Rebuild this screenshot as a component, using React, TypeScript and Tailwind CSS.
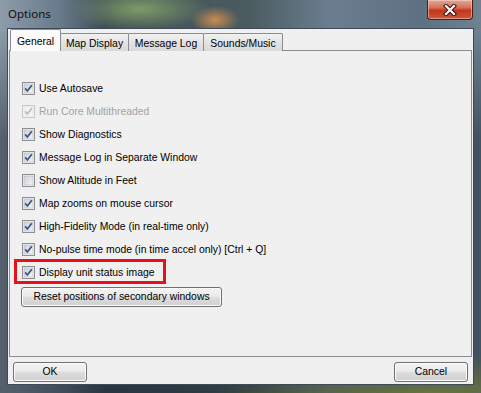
const rows = [
  { label: "Use Autosave", checked: true },
  { label: "Run Core Multithreaded", checked: true, disabled: true },
  { label: "Show Diagnostics", checked: true },
  { label: "Message Log in Separate Window", checked: true },
  { label: "Show Altitude in Feet", checked: false },
  { label: "Map zooms on mouse cursor", checked: true },
  { label: "High-Fidelity Mode (in real-time only)", checked: true },
  { label: "No-pulse time mode (in time accel only) [Ctrl + Q]", checked: true },
];

function CheckBox({ checked, disabled }: { checked: boolean; disabled?: boolean }) {
  return (
    <svg width="13" height="13" viewBox="0 0 13 13" className="shrink-0">
      <defs>
        <linearGradient id={disabled ? "cbd" : "cb"} x1="0" y1="0" x2="1" y2="1">
          <stop offset="0" stopColor={disabled ? "#f4f4f4" : "#cbcfd5"} />
          <stop offset="1" stopColor={disabled ? "#f4f4f4" : "#f6f6f6"} />
        </linearGradient>
      </defs>
      <rect x="0.5" y="0.5" width="12" height="12" fill="#f4f4f4" stroke={disabled ? "#c8c8c8" : "#8e8f8f"} />
      <rect x="2" y="2" width="9" height="9" fill={`url(#${disabled ? "cbd" : "cb"})`} stroke={disabled ? "#e2e2e2" : "#b4b8bf"} strokeWidth="0.6" />
      {checked && (
        <path
          d="M3.2 6.4 L5.4 9 L9.8 3.3"
          fill="none"
          stroke={disabled ? "#b9b9b9" : "#3d4f87"}
          strokeWidth="1.7"
          strokeLinejoin="miter"
        />
      )}
    </svg>
  );
}

const btn =
  "flex items-center justify-center h-[20px] border border-[#707070] rounded-[3px] bg-[linear-gradient(#f3f3f3_0%,#ebebeb_45%,#dddddd_52%,#cfcfcf_100%)] shadow-[inset_0_0_0_1px_#fbfbfb] text-[10.4px] text-black";

const tab =
  "h-[18px] -ml-px flex justify-center pt-[2px] text-[10.4px] text-black bg-[linear-gradient(#f2f2f2,#e2e2e2_55%,#d9d9d9)] border border-b-0 border-[#898c95] rounded-t-[2px]";

export default function App() {
  return (
    <div className="w-[481px] h-[393px] overflow-hidden flex flex-col font-['Liberation_Sans',Arial,sans-serif] bg-[radial-gradient(70px_22px_at_140px_9px,#7d9c66,transparent),radial-gradient(24px_14px_at_215px_20px,#c88c52,transparent),radial-gradient(220px_40px_at_430px_395px,#6b7440,transparent),linear-gradient(to_bottom,transparent_30px,rgba(15,25,35,0.45)_140px,rgba(15,25,35,0.45)_100%),linear-gradient(to_right,#8d9ca9_0px,#687a8b_60px,#3f4c56_105px,#4b5c60_250px,#6a7e90_330px,#5e7183_420px,#6f8290_481px)]">
      {/* title bar */}
      <div className="flex h-[28px] shrink-0 items-start">
        <span className="mt-[6px] ml-[8px] text-[11.5px] leading-[16px] text-[#101010] font-['Noto_Sans',sans-serif]">
          Options
        </span>
        <div className="ml-auto mr-[8px] w-[46px] h-[20px] flex items-center justify-center rounded-b-[4px] border border-t-0 border-[#4e1a12] bg-[linear-gradient(#e2a898_0%,#d4705c_40%,#c2371c_55%,#cd563c_100%)] shadow-[inset_0_0_0_1px_rgba(255,220,210,0.5)]">
          <svg width="14" height="12" viewBox="0 0 14 12">
            <path d="M3 2 L11 10 M11 2 L3 10" stroke="#3a1008" strokeWidth="4.2" strokeLinecap="square" />
            <path d="M3 2 L11 10 M11 2 L3 10" stroke="#ffffff" strokeWidth="2.2" strokeLinecap="square" />
          </svg>
        </div>
      </div>

      {/* client area */}
      <div className="mx-[7px] h-[357px] shrink-0 flex flex-col bg-[#f0f0f0] border border-[#3e4a56]">
        {/* tabs */}
        <div className="flex items-end h-[22px] ml-[2px] relative z-10">
          <div className="w-[51px] h-[22px] flex justify-center pt-[4px] text-[10.4px] text-black bg-[#fbfbfb] border border-b-0 border-[#898c95] rounded-t-[2px]">
            General
          </div>
          <div className={`${tab} w-[69px]`}>Map Display</div>
          <div className={`${tab} w-[76px]`}>Message Log</div>
          <div className={`${tab} w-[80px]`}>Sounds/Music</div>
        </div>

        {/* tab panel */}
        <div className="ml-[1px] -mt-px w-[463px] h-[307px] border border-[#898c95] bg-[#f0f0f0] pt-[26px] flex flex-col">
          {rows.map((r) => (
            <div key={r.label} className="h-[23px] flex items-center gap-[4px] pl-[12px]">
              <CheckBox checked={r.checked} disabled={r.disabled} />
              <span className={`text-[10.4px] leading-[13px] ${r.disabled ? "text-[#a3a3a3]" : "text-black"}`}>
                {r.label}
              </span>
            </div>
          ))}
          <div className="relative h-[23px] flex items-center gap-[4px] pl-[12px]">
            <CheckBox checked />
            <span className="text-[10.4px] leading-[13px] text-black">Display unit status image</span>
            <div className="absolute top-[-2px] left-[4px] w-[152px] h-[25px] border-[3px] border-[#e8111b]" />
          </div>
          <div className={`${btn} mt-[3px] ml-[11px] w-[201px]`}>Reset positions of secondary windows</div>
        </div>

        {/* bottom buttons */}
        <div className="flex justify-between mt-[5px] px-[5px]">
          <div className={`${btn} w-[74px]`}>OK</div>
          <div className={`${btn} w-[74px]`}>Cancel</div>
        </div>
      </div>
    </div>
  );
}
